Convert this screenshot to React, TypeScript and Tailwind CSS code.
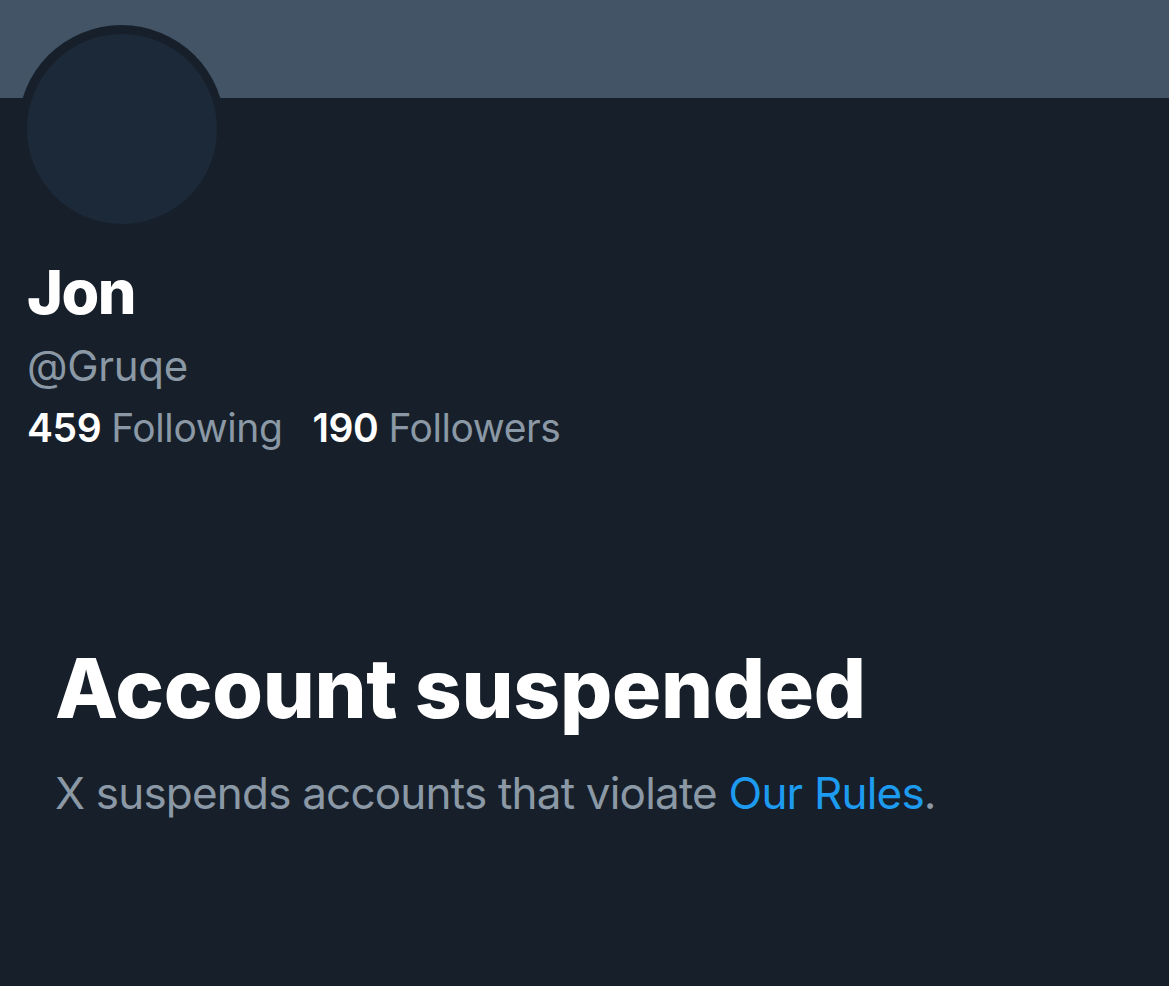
export default function App() {
  return (
    <div className="w-[1169px] h-[986px] bg-[#17202a] overflow-hidden" style={{ fontFamily: 'Inter, "Noto Sans", sans-serif' }}>
      <div className="h-[98px] bg-[#425466]" />
      <div className="relative px-[27px]">
        <div className="absolute left-[18px] top-[-73px] w-[207px] h-[207px] rounded-full bg-[#17202a] flex items-center justify-center">
          <div className="w-[190px] h-[190px] rounded-full bg-[#1c2938]" />
        </div>
        <div className="pt-[163px]">
          <div className="text-white font-extrabold text-[61px] leading-[62px] tracking-[-1.5px]">Jon</div>
          <div className="mt-[19px] text-[#8b98a5] text-[42px] leading-[48px] tracking-[-0.3px]">@Gruqe</div>
          <div className="mt-[15px] flex text-[39px] leading-[46px] tracking-[-0.4px]">
            <span className="text-white font-semibold">459</span>
            <span className="text-[#8b98a5] ml-[10px]">Following</span>
            <span className="text-white font-semibold ml-[30px]">190</span>
            <span className="text-[#8b98a5] ml-[10px]">Followers</span>
          </div>
        </div>
        <div className="pl-[28px] pt-[194px]">
          <div className="text-white font-extrabold text-[82px] leading-[88px] tracking-[-0.3px]">Account suspended</div>
          <div className="mt-[34px] text-[#8b98a5] text-[44px] leading-[52px] tracking-[-0.8px]">
            X suspends accounts that violate <span className="text-[#1d9bf0]">Our Rules</span>.
          </div>
        </div>
      </div>
    </div>
  );
}
